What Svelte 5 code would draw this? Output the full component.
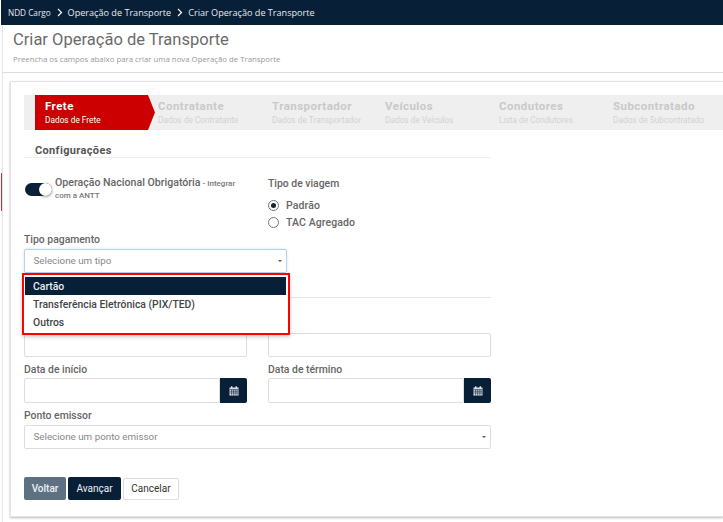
<script>
  const steps = [
    { t: 'Contratante', s: 'Dados de Contratante' },
    { t: 'Transportador', s: 'Dados de Transportador' },
    { t: 'Veículos', s: 'Dados de Veículos' },
    { t: 'Condutores', s: 'Lista de Condutores' },
    { t: 'Subcontratado', s: 'Dados de Subcontratado' }
  ];
</script>

{#snippet cal()}
  <button type="button" class="calbtn" aria-label="Calendário">
    <svg width="10" height="10" viewBox="0 0 10 10">
      <rect x="0.5" y="1.5" width="9" height="8" fill="#e8edf2" />
      <rect x="2" y="0.3" width="1.4" height="2.2" fill="#e8edf2" />
      <rect x="6.6" y="0.3" width="1.4" height="2.2" fill="#e8edf2" />
      <path d="M0.5 3.4h9M0.5 5.2h9M0.5 7h9M2.6 3.4v6M4.4 3.4v6M6.2 3.4v6M8 3.4v6" stroke="#0a2139" stroke-width="0.6" fill="none" />
    </svg>
  </button>
{/snippet}

<div class="page">
  <header class="topbar">
    <span class="c1">NDD Cargo</span>
    <svg class="chev" width="6" height="9" viewBox="0 0 6 9"><path d="M1 1l3.5 3.5L1 8" fill="none" stroke="#fff" stroke-width="1.2" /></svg>
    <span class="c2">Operação de Transporte</span>
    <svg class="chev" width="6" height="9" viewBox="0 0 6 9"><path d="M1 1l3.5 3.5L1 8" fill="none" stroke="#fff" stroke-width="1.2" /></svg>
    <span class="c2">Criar Operação de Transporte</span>
  </header>

  <div class="body">
    <div class="pagehead">
      <h1>Criar Operação de Transporte</h1>
      <p>Preencha os campos abaixo para criar uma nova Operação de Transporte</p>
    </div>

    <main class="card">
      <nav class="wizard">
        <div class="step active">
          <strong>Frete</strong>
          <small>Dados de Frete</small>
        </div>
        {#each steps as st}
          <div class="step">
            <strong>{st.t}</strong>
            <small>{st.s}</small>
          </div>
        {/each}
      </nav>

      <form class="form">
        <h2>Configurações</h2>

        <div class="cols config">
          <div class="toggle-row">
            <span class="toggle"><span class="knob"></span></span>
            <div class="toggle-text">
              <div><span class="tmain">Operação Nacional Obrigatória</span><span class="tsub dash">- Integrar</span></div>
              <div class="tsub">com a ANTT</div>
            </div>
          </div>
          <div class="trip">
            <div class="label">Tipo de viagem</div>
            <div class="radio"><span class="dot on"></span>Padrão</div>
            <div class="radio"><span class="dot"></span>TAC Agregado</div>
          </div>
        </div>

        <div class="paywrap">
          <div class="label">Tipo pagamento</div>
          <div class="select focus">
            <span>Selecione um tipo</span><i class="caret"></i>
          </div>
          <div class="menu">
            <div class="opt sel">Cartão</div>
            <div class="opt">Transferência Eletrônica (PIX/TED)</div>
            <div class="opt">Outros</div>
          </div>
        </div>

        <div class="rule"></div>

        <div class="cols plain">
          <div class="input"></div>
          <div class="input"></div>
        </div>

        <div class="cols dates">
          <div>
            <div class="label">Data de início</div>
            <div class="group"><div class="input"></div>{@render cal()}</div>
          </div>
          <div>
            <div class="label">Data de término</div>
            <div class="group"><div class="input"></div>{@render cal()}</div>
          </div>
        </div>

        <div class="emitter">
          <div class="label">Ponto emissor</div>
          <div class="select">
            <span>Selecione um ponto emissor</span><i class="caret"></i>
          </div>
        </div>

        <div class="actions">
          <button type="button" class="btn back">Voltar</button>
          <button type="button" class="btn next">Avançar</button>
          <button type="button" class="btn cancel">Cancelar</button>
        </div>
      </form>
    </main>
  </div>
  <span class="edge"></span>
</div>

<style>
  :global(body) { margin: 0; background: #fff; }
  .page { position: relative; width: 723px; height: 522px; overflow: hidden; background: #fff; font-family: Roboto, "Liberation Sans", sans-serif; color: #555; }
  .topbar { height: 25px; margin-left: 1px; background: #071f37; display: flex; align-items: center; padding-left: 7px; color: #e6ebf0; font-family: "Open Sans", sans-serif; box-sizing: border-box; }
  .c1 { font-size: 8.2px; }
  .c2 { font-size: 9.1px; }
  .chev { margin: 0 5px 0 6px; }
  .body { margin-left: 2px; border-left: 1px solid #e4e4e4; height: 497px; }
  .pagehead { height: 48px; box-sizing: border-box; padding: 4px 0 0 10px; border-bottom: 1px solid #ddd; }
  h1 { margin: 0; font: 400 16.55px/22px Roboto, sans-serif; color: #6b6b6b; }
  .pagehead p { margin: 3px 0 0; font: 400 7.8px/10px "Open Sans", sans-serif; color: #999; }
  .card { margin: 8px 0 0 7px; height: 436px; box-sizing: border-box; border: 1px solid #e3e3e3; border-right: 0; box-shadow: 0 1px 2px #bbb; padding: 13px 0 0 13px; }
  .wizard { height: 35px; background: #efefef; display: flex; padding-left: 11px; }
  .step { width: 114px; box-sizing: border-box; padding: 4px 0 0 10px; display: flex; flex-direction: column; color: #c9c9c9; flex: none; }
  .step strong { font: 700 11.5px/14px Roboto, sans-serif; letter-spacing: 0.45px; }
  .step small { font: 400 8.3px/11px Roboto, sans-serif; margin-top: 2px; color: #d2d2d2; white-space: nowrap; }
  .step.active { width: 120px; background: #cc0000; color: #fff; clip-path: polygon(0 0, 113px 0, 120px 50%, 113px 100%, 0 100%); }
  .step.active small { color: #fff; }
  .step:nth-child(2) { width: 107px; padding-left: 3px; }
  .step:nth-child(3) { width: 113px; }
  .form { width: 467px; }
  h2 { margin: 13px 0 0; padding: 1px 0 0 11px; font: 700 11px/13px Roboto, sans-serif; letter-spacing: 0.35px; color: #555; border-bottom: 1px solid #eee; width: 456px; }
  .cols { display: grid; grid-template-columns: 223px 223px; column-gap: 21px; }
  .config { margin-top: 19px; height: 56px; }
  .toggle-row { display: flex; gap: 3px; padding-left: 1px; }
  .toggle { width: 27px; height: 13px; margin-top: 6px; border-radius: 7px; background: #0a2139; position: relative; flex: none; }
  .knob { position: absolute; right: 0; top: 0; width: 13px; height: 13px; border-radius: 50%; background: #fff; box-shadow: 0 1px 3px #0006; }
  .toggle-text { width: 185px; line-height: 12px; font-size: 8px; color: #777; }
  .tmain { font-size: 10.6px; color: #666; font-weight: 500; }
  .tsub { font-weight: 500; }
  .dash { margin-left: 2px; }
  .label { font-size: 10.4px; line-height: 13px; font-weight: 500; color: #666; }
  .trip .radio { display: flex; align-items: center; gap: 7px; height: 17px; font-size: 10.5px; font-weight: 500; color: #666; letter-spacing: 0.1px; }
  .trip .label { margin-bottom: 7px; }
  .dot { width: 9px; height: 9px; border: 1px solid #777; border-radius: 50%; background: #fff; position: relative; }
  .dot.on::after { content: ""; position: absolute; inset: 2px; border-radius: 50%; background: #222; }
  .paywrap { position: relative; width: 263px; }
  .select { height: 24px; box-sizing: border-box; border: 1px solid #ddd; border-radius: 2px; display: flex; align-items: center; justify-content: space-between; padding: 0 4px 2px 8.5px; font-size: 9.8px; color: #888; background: #fff; margin-top: 3px; }
  .paywrap .select { width: 263px; border-color: #b5d3ec; box-shadow: 0 0 3px #cfe3f4; }
  .caret { width: 0; height: 0; border: 2.5px solid transparent; border-top-color: #555; border-bottom: 0; margin-top: 2px; }
  .menu { position: absolute; left: -2px; top: 40px; width: 261px; padding: 2px 2px 2px 1px; border: 2px solid #f00; background: #fff; box-shadow: 0 2px 4px #0003; z-index: 2; }
  .opt { height: 18px; line-height: 20px; padding-left: 8px; font-size: 10.4px; font-weight: 500; color: #444; }
  .opt.sel { background: #071f37; color: #e9edf1; }
  .rule { margin-top: 24px; height: 1px; width: 467px; background: #e6e6e6; }
  .plain { margin-top: 35px; }
  .input { height: 24px; flex: 1; box-sizing: border-box; border: 1px solid #ddd; border-radius: 2px; background: #fff; }
  .dates { margin-top: 6px; }
  .group { display: flex; margin-top: 2px; }
  .group .input { height: 25px; }
  .calbtn { width: 27px; height: 25px; border: 0; padding: 0; background: #071f37; display: flex; align-items: center; justify-content: center; border-radius: 0 2px 2px 0; flex: none; }
  .emitter { margin-top: 6px; width: 467px; }
  .actions { margin-top: 28px; display: flex; gap: 2px; align-items: center; }
  .btn { height: 23px; font: 400 10px Roboto, sans-serif; border: 1px solid transparent; border-radius: 2px; padding: 0; box-sizing: border-box; }
  .back { width: 42px; background: #5e7183; color: #eef1f4; font-weight: 500; }
  .next { width: 53px; background: #071f37; color: #eef1f4; }
  .cancel { width: 56px; height: 22px; background: #fff; border-color: #ddd; color: #333; }
  .edge { position: absolute; left: 1px; top: 173px; width: 1px; height: 38px; background: #b9343a; }
</style>
